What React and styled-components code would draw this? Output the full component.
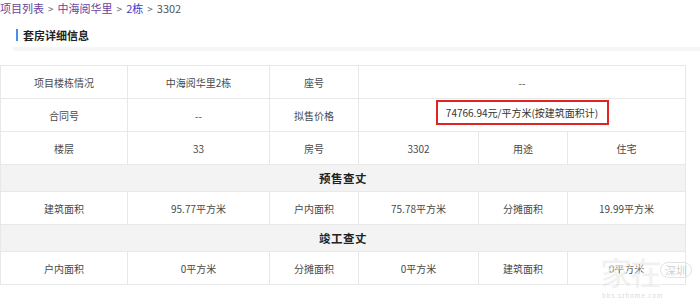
import React from "react";
import styled, { createGlobalStyle } from "styled-components";

const Global = createGlobalStyle`
  html, body { margin: 0; padding: 0; background: #fff; }
  body { font-family: "Noto Sans CJK SC", "Noto Sans", sans-serif; color: #333; }
`;

const Page = styled.div`
  position: relative;
  width: 700px;
  height: 300px;
  overflow: hidden;
`;

const Breadcrumb = styled.div`
  height: 16px;
  line-height: 16px;
  font-size: 11px;
  color: #666;
  white-space: nowrap;
`;

const Crumb = styled.a`
  color: ${(p) => (p.$current ? "#3a3ad0" : "#6a3f9e")};
  text-decoration: none;
`;

const Sep = styled.span`
  color: #666;
  margin: 0 4px;
  font-size: 10px;
`;

const Last = styled.span`
  color: #555;
`;

const SectionHead = styled.div`
  margin: 13px 0 0 16px;
  height: 12px;
  line-height: 12px;
  border-left: 2px solid #4a8fe0;
  padding-left: 5px;
  font-size: 11px;
  font-weight: bold;
  color: #222;
`;

const Divider = styled.div`
  margin: 6px 0 0 13px;
  height: 4px;
  background: #f6f6f6;
`;

const Table = styled.table`
  margin-top: 14px;
  width: 685px;
  border-collapse: collapse;
  table-layout: fixed;
  font-size: 10px;
  color: #4a4a4a;
`;

const Row = styled.tr`
  height: ${(p) => (p.$head ? "27px" : "33px")};
  background: ${(p) => (p.$head ? "#f3f3f3" : "#fff")};
`;

const Cell = styled.td`
  border: 1px solid #e8e8e8;
  text-align: center;
  vertical-align: middle;
  padding: 0;
  white-space: nowrap;
`;

const HeadCell = styled(Cell)`
  font-size: 11.5px;
  font-weight: bold;
  color: #222;
  letter-spacing: 0.5px;
`;

const Marked = styled.span`
  display: inline-block;
  box-sizing: border-box;
  width: 173px;
  height: 25px;
  line-height: 21px;
  margin-bottom: 5px;
  border: 2px solid #e02424;
  color: #333;
`;

const Watermark = styled.div`
  position: absolute;
  left: 598px;
  top: 252px;
  width: 100px;
  height: 48px;
  pointer-events: none;
`;

const WmBig = styled.span`
  position: absolute;
  left: 2px;
  top: 2px;
  font-size: 32px;
  line-height: 34px;
  font-weight: bold;
  color: rgba(220, 220, 220, 0.4);
  -webkit-text-stroke: 1px rgba(255, 255, 255, 0.8);
  letter-spacing: -2px;
`;

const WmPill = styled.span`
  position: absolute;
  left: 62px;
  top: 10px;
  font-size: 11px;
  padding: 0 4px;
  border: 1px solid rgba(215, 215, 215, 0.7);
  border-radius: 8px;
  color: rgba(195, 195, 195, 0.8);
  line-height: 14px;
`;

const WmSmall = styled.span`
  position: absolute;
  left: 4px;
  top: 40px;
  font-size: 6px;
  line-height: 7px;
  letter-spacing: 1px;
  color: rgba(205, 205, 205, 0.8);
`;

const cols = [127, 142, 89, 120, 89, 118];

export default function App() {
  return (
    <Page>
      <Global />
      <Breadcrumb>
        <Crumb href="#">项目列表</Crumb>
        <Sep>&gt;</Sep>
        <Crumb href="#">中海阅华里</Crumb>
        <Sep>&gt;</Sep>
        <Crumb href="#" $current>2栋</Crumb>
        <Sep>&gt;</Sep>
        <Last>3302</Last>
      </Breadcrumb>
      <SectionHead>套房详细信息</SectionHead>
      <Divider />
      <Table>
        <colgroup>
          {cols.map((w, i) => (
            <col key={i} style={{ width: w }} />
          ))}
        </colgroup>
        <tbody>
          <Row>
            <Cell>项目楼栋情况</Cell>
            <Cell>中海阅华里2栋</Cell>
            <Cell>座号</Cell>
            <Cell colSpan={3}>--</Cell>
          </Row>
          <Row>
            <Cell>合同号</Cell>
            <Cell>--</Cell>
            <Cell>拟售价格</Cell>
            <Cell colSpan={3}>
              <Marked>74766.94元/平方米(按建筑面积计)</Marked>
            </Cell>
          </Row>
          <Row>
            <Cell>楼层</Cell>
            <Cell>33</Cell>
            <Cell>房号</Cell>
            <Cell>3302</Cell>
            <Cell>用途</Cell>
            <Cell>住宅</Cell>
          </Row>
          <Row $head>
            <HeadCell colSpan={6}>预售查丈</HeadCell>
          </Row>
          <Row>
            <Cell>建筑面积</Cell>
            <Cell>95.77平方米</Cell>
            <Cell>户内面积</Cell>
            <Cell>75.78平方米</Cell>
            <Cell>分摊面积</Cell>
            <Cell>19.99平方米</Cell>
          </Row>
          <Row $head>
            <HeadCell colSpan={6}>竣工查丈</HeadCell>
          </Row>
          <Row>
            <Cell>户内面积</Cell>
            <Cell>0平方米</Cell>
            <Cell>分摊面积</Cell>
            <Cell>0平方米</Cell>
            <Cell>建筑面积</Cell>
            <Cell>0平方米</Cell>
          </Row>
        </tbody>
      </Table>
      <Watermark>
        <WmBig>家在</WmBig>
        <WmPill>深圳</WmPill>
        <WmSmall>bbs.szhome.com</WmSmall>
      </Watermark>
    </Page>
  );
}
